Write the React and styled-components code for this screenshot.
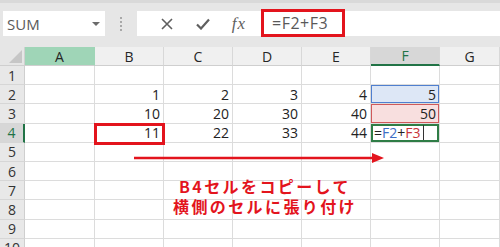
import React from 'react';
import styled, { createGlobalStyle } from 'styled-components';

const GlobalStyle = createGlobalStyle`
  html, body {
    margin: 0;
    padding: 0;
    background: #ffffff;
    overflow: hidden;
  }
`;

const UI_FONT = `'Open Sans', 'Noto Sans', Arial, sans-serif`;

const Page = styled.div`
  position: relative;
  width: 500px;
  height: 247px;
  overflow: hidden;
  font-family: ${UI_FONT};
  background: #ffffff;
`;

const Toolbar = styled.div`
  height: 47px;
  box-sizing: border-box;
  background: #e6e6e6;
  border-top: 3px solid #d9d9d9;
  display: flex;
  align-items: flex-start;
  padding: 8px 0 0 3px;
`;

const NameBox = styled.div`
  width: 102px;
  height: 25px;
  box-sizing: border-box;
  background: #ffffff;
  display: flex;
  align-items: center;
  justify-content: space-between;
  padding: 0 5px 0 4px;
  color: #5a5a5a;
  font-size: 15px;
`;

const DropArrow = styled.span`
  width: 0;
  height: 0;
  border-left: 4px solid transparent;
  border-right: 4px solid transparent;
  border-top: 4px solid #6b6b6b;
`;

const Grip = styled.div`
  width: 32px;
  height: 25px;
  display: flex;
  flex-direction: column;
  align-items: center;
  justify-content: center;
  gap: 2px;
  span {
    width: 2px;
    height: 2px;
    background: #a8a8a8;
  }
`;

const FormulaBar = styled.div`
  flex: 1;
  height: 25px;
  background: #ffffff;
  display: flex;
  align-items: center;
  padding-left: 12px;
`;

const IconButton = styled.div`
  width: 36px;
  height: 25px;
  display: flex;
  align-items: center;
  justify-content: center;
  color: #5f5f5f;
`;

const Fx = styled.span`
  font-family: 'Liberation Serif', 'DejaVu Serif', serif;
  font-style: italic;
  font-size: 17px;
  color: #5f5f5f;
  letter-spacing: 1px;
`;

const FormulaText = styled.div`
  margin-left: 4px;
  margin-top: -2px;
  width: 84px;
  height: 28px;
  box-sizing: border-box;
  border: 3px solid #e3141d;
  display: flex;
  align-items: center;
  padding-left: 8px;
  font-size: 16px;
  color: #595959;
  letter-spacing: 0.5px;
`;

const Sheet = styled.div`
  display: grid;
  grid-template-columns: 25px 70px repeat(5, 69px) 1fr;
  grid-template-rows: 19px;
  grid-auto-rows: 19.2px;
  font-family: ${UI_FONT};
  font-size: 14px;
  color: #222222;
`;

const Corner = styled.div`
  background: #e6e6e6;
  border-right: 1px solid #d0d0d0;
  border-bottom: 1px solid #cfcfcf;
  box-sizing: border-box;
  position: relative;
  &::after {
    content: '';
    position: absolute;
    right: 2px;
    bottom: 2px;
    border-left: 13px solid transparent;
    border-bottom: 13px solid #c6c6c6;
  }
`;

const headerBg = {
  normal: '#f0f0f0',
  green: '#9fd5b7',
  active: '#d7d7d7',
};

const ColHeader = styled.div`
  box-sizing: border-box;
  background: ${p => headerBg[p.$state]};
  border-right: 1px solid ${p => (p.$state === 'green' ? '#9fd5b7' : '#d8d8d8')};
  border-bottom: ${p => (p.$state === 'active' ? '2px solid #217346' : '1px solid #cfcfcf')};
  display: flex;
  align-items: center;
  justify-content: center;
  color: ${p => (p.$state === 'active' ? '#217346' : '#262626')};
  font-size: 14px;
`;

const RowHeader = styled.div`
  box-sizing: border-box;
  background: ${p => (p.$active ? '#d7d7d7' : '#e8e8e8')};
  border-right: ${p => (p.$active ? '2px solid #217346' : '1px solid #cfcfcf')};
  border-bottom: 1px solid #d6d6d6;
  display: flex;
  align-items: center;
  justify-content: center;
  color: ${p => (p.$active ? '#217346' : '#333333')};
  font-size: 14px;
`;

const fills = {
  blue: { bg: '#dde7f6', line: '#4f7fcf' },
  red: { bg: '#f8dfdf', line: '#d0595a' },
  green: { bg: '#ffffff', line: '#2f7d46' },
};

const Cell = styled.div`
  position: relative;
  box-sizing: border-box;
  border-right: 1px solid #dcdcdc;
  border-bottom: 1px solid #dcdcdc;
  background: ${p => (p.$mark ? fills[p.$mark].bg : '#ffffff')};
  box-shadow: ${p => (p.$mark ? `inset 0 0 0 ${p.$mark === 'green' ? 2 : 1}px ${fills[p.$mark].line}` : 'none')};
  display: flex;
  align-items: center;
  justify-content: ${p => (p.$left ? 'flex-start' : 'flex-end')};
  padding: 0 3px;
  white-space: nowrap;
`;

const Ref = styled.span`
  color: ${p => p.$color};
`;

const Caret = styled.span`
  width: 1px;
  height: 15px;
  background: #333333;
  margin-left: 2px;
`;

const Callout = styled.div`
  position: absolute;
  left: 94px;
  top: 123px;
  width: 71px;
  height: 22px;
  box-sizing: border-box;
  border: 3px solid #e3141d;
`;

const Arrow = styled.svg`
  position: absolute;
  left: 132px;
  top: 152px;
`;

const Note = styled.div`
  position: absolute;
  left: 160px;
  top: 176px;
  width: 210px;
  display: flex;
  flex-direction: column;
  align-items: center;
  font-family: 'Noto Sans CJK JP', 'Noto Sans', sans-serif;
  font-weight: 700;
  font-size: 16px;
  letter-spacing: 2.4px;
  color: #e3141d;
`;

const NoteLine = styled.span`
  display: block;
  height: 20px;
  line-height: 20px;
  white-space: nowrap;
`;

const COLS = ['A', 'B', 'C', 'D', 'E', 'F', 'G'];

const DATA = {
  2: { B: 1, C: 2, D: 3, E: 4, F: 5 },
  3: { B: 10, C: 20, D: 30, E: 40, F: 50 },
  4: { B: 11, C: 22, D: 33, E: 44 },
};

const MARKS = { F2: 'blue', F3: 'red', F4: 'green' };

const Formula = () => (
  <>
    <span>=</span>
    <Ref $color="#3d6fc6">F2</Ref>
    <span>+</span>
    <Ref $color="#c8343a">F3</Ref>
    <Caret />
  </>
);

const App = () => {
  const rows = Array.from({ length: 10 }, (_, i) => i + 1);

  return (
    <Page>
      <GlobalStyle />
      <Toolbar>
        <NameBox>
          SUM
          <DropArrow />
        </NameBox>
        <Grip>
          <span />
          <span />
          <span />
          <span />
        </Grip>
        <FormulaBar>
          <IconButton>
            <svg width="12" height="12" viewBox="0 0 12 12">
              <path d="M1 1 L11 11 M11 1 L1 11" stroke="currentColor" strokeWidth="1.6" fill="none" />
            </svg>
          </IconButton>
          <IconButton>
            <svg width="14" height="12" viewBox="0 0 14 12">
              <path d="M1 6.5 L5 10.5 L13 1.5" stroke="currentColor" strokeWidth="2.2" fill="none" />
            </svg>
          </IconButton>
          <IconButton>
            <Fx>fx</Fx>
          </IconButton>
          <FormulaText>=F2+F3</FormulaText>
        </FormulaBar>
      </Toolbar>

      <Sheet>
        <Corner />
        {COLS.map(c => (
          <ColHeader key={c} $state={c === 'A' ? 'green' : c === 'F' ? 'active' : 'normal'}>
            {c}
          </ColHeader>
        ))}
        {rows.map(r => (
          <React.Fragment key={r}>
            <RowHeader $active={r === 4}>{r}</RowHeader>
            {COLS.map(c => {
              const id = c + r;
              const isFormula = id === 'F4';
              return (
                <Cell key={id} $mark={MARKS[id]} $left={isFormula}>
                  {isFormula ? <Formula /> : DATA[r] && DATA[r][c]}
                </Cell>
              );
            })}
          </React.Fragment>
        ))}
      </Sheet>

      <Callout />
      <Arrow width="256" height="12" viewBox="0 0 256 12">
        <line x1="2" y1="6" x2="242" y2="6" stroke="#e3141d" strokeWidth="2.5" />
        <path d="M240 1 L252 6 L240 11 Z" fill="#e3141d" />
      </Arrow>
      <Note>
        <NoteLine>B4セルをコピーして</NoteLine>
        <NoteLine>横側のセルに張り付け</NoteLine>
      </Note>
    </Page>
  );
};

export default App;
